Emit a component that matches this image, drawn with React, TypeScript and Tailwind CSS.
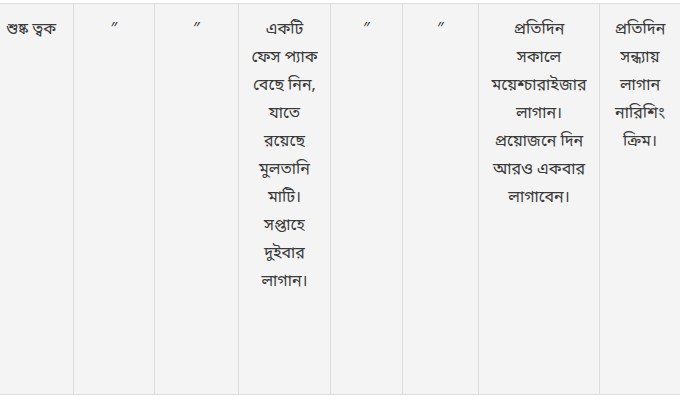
import React from "react";

const cols: { w: string; text: string[]; align: string }[] = [
  { w: "w-[74px]", text: ["শুষ্ক ত্বক"], align: "text-left pl-[6px]" },
  { w: "w-[81px]", text: ["″"], align: "text-center" },
  { w: "w-[84px]", text: ["″"], align: "text-center" },
  {
    w: "w-[92px]",
    text: ["একটি", "ফেস প্যাক", "বেছে নিন,", "যাতে", "রয়েছে", "মুলতানি", "মাটি।", "সপ্তাহে", "দুইবার", "লাগান।"],
    align: "text-center",
  },
  { w: "w-[72px]", text: ["″"], align: "text-center" },
  { w: "w-[76px]", text: ["″"], align: "text-center" },
  {
    w: "w-[121px]",
    text: ["প্রতিদিন", "সকালে", "ময়েশ্চারাইজার", "লাগান।", "প্রয়োজনে দিন", "আরও একবার", "লাগাবেন।"],
    align: "text-center",
  },
  { w: "flex-1", text: ["প্রতিদিন", "সন্ধ্যায়", "লাগান", "নারিশিং", "ক্রিম।"], align: "text-center" },
];

export default function App() {
  return (
    <div
      className="w-[680px] h-[405px] bg-white pt-[3px] overflow-hidden"
      style={{ fontFamily: '"Noto Sans Bengali", "Lohit Bengali", "Noto Sans", sans-serif' }}
    >
      <div className="flex h-[392px] bg-[#f4f4f4] border-t border-b border-[#dddddd]">
        {cols.map((c, i) => (
          <div
            key={i}
            className={`${c.w} ${c.align} ${i < cols.length - 1 ? "border-r border-[#dddddd]" : ""} pt-[12px] text-[16px] leading-[28px] text-[#3a3a3a]`}
          >
            {c.text.map((t, j) => (
              <div key={j}>{t}</div>
            ))}
          </div>
        ))}
      </div>
    </div>
  );
}
